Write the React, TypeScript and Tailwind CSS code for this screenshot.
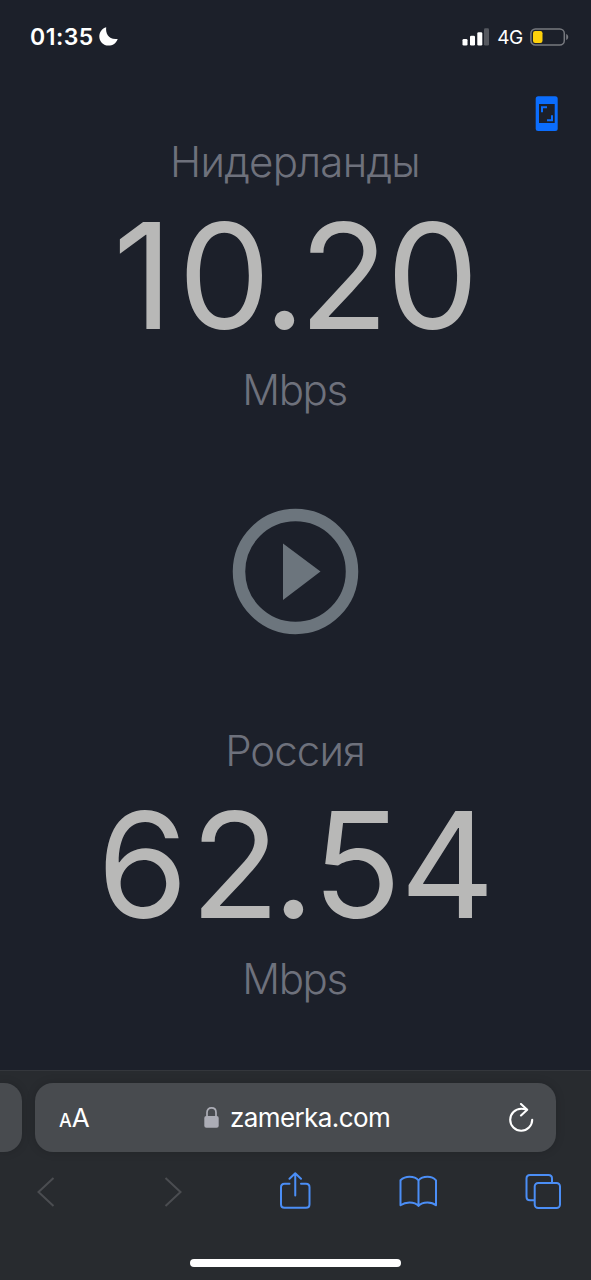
import React from 'react';

interface SpeedResultProps {
  country: string;
  labelClassName: string;
  children: React.ReactNode;
}

const SpeedResult: React.FC<SpeedResultProps> = ({ country, labelClassName, children }) => (
  <section className="flex flex-col items-center whitespace-nowrap text-[#6e717c]">
    <h2 className={`h-[50px] pr-px text-[42px] leading-[51px] font-light ${labelClassName}`}>{country}</h2>
    <p className="h-[180px] text-[147px] leading-[180px] text-[#b8b8b7]">{children}</p>
    <p className="h-12 pr-[2px] text-[42px] leading-[48px] font-light tracking-[-1.4px]">Mbps</p>
  </section>
);

const StatusBar = () => (
  <header className="flex h-[74px] items-center justify-between pl-[30px] pr-[22px] text-white">
    <div className="flex items-center gap-[5px]">
      <span className="text-[23px] leading-none font-semibold tracking-[0.5px]">01:35</span>
      <svg className="-mt-[2px]" width="19" height="19" viewBox="0 0 19 19" fill="currentColor">
        <path d="M7.2.3C6.4 6.700 9.600 13.100 18.700 11.900C17.200 16.100 13.700 18.600 9.500 18.600C4.300 18.600.3 14.600.3 9.500C.3 5.300 3.100 1.500 7.200.3Z" />
      </svg>
    </div>
    <div className="flex items-center">
      <svg width="27" height="18" viewBox="0 0 27 18" fill="currentColor">
        <rect x="0.500" y="11" width="5" height="6.500" rx="1.300" />
        <rect x="8" y="7.800" width="5" height="9.700" rx="1.300" />
        <rect x="15.300" y="4.300" width="5" height="13.200" rx="1.300" />
        <rect x="22" y="0.300" width="5" height="17.200" rx="1.300" opacity="0.250" />
      </svg>
      <span className="ml-[8px] text-[19px] leading-none tracking-[-0.3px]">4G</span>
      <svg className="ml-[7px]" width="39" height="18" viewBox="0 0 39 18">
        <rect x="0.900" y="0.900" width="33.400" height="16.200" rx="4.500" fill="none" stroke="#77797f" strokeWidth="1.500" />
        <rect x="3" y="3" width="9.500" height="12" rx="2.200" fill="#fdd10b" />
        <path d="M36.200 6v6c1.300-.5 2-1.700 2-3s-.7-2.500-2-3Z" fill="#77797f" />
      </svg>
    </div>
  </header>
);

const BottomBar = () => (
  <footer className="flex h-[210px] flex-col border-t border-[#34373c] bg-[#282b2f]">
    <div className="mt-3 flex h-[69px] gap-[13px] text-white">
      <div className="w-[22px] rounded-r-[18px] bg-[#484b4f] shadow-[0_0_10px_rgba(0,0,0,0.15)]" />
      <div className="flex w-[521px] items-center rounded-[18px] bg-[#484b4f] pl-6 pr-[22px] shadow-[0_0_10px_rgba(0,0,0,0.15)]">
        <div className="flex w-[145px] items-baseline leading-none">
          <span className="text-[18px] font-medium">A</span>
          <span className="text-[26px]">A</span>
        </div>
        <svg width="15" height="21" viewBox="0 0 15 21">
          <path d="M3 10V5.500C3 2.500 4.800.9 7.500.9S12 2.500 12 5.500V10" fill="none" stroke="#acadb6" strokeWidth="1.700" />
          <rect x="0.300" y="9" width="14.400" height="11.700" rx="2" fill="#acadb6" />
        </svg>
        <span className="ml-[11px] pt-px text-[26px] leading-none tracking-[-0.6px]">zamerka.com</span>
        <svg className="ml-auto" width="26" height="30" viewBox="0 0 26 30" fill="none" stroke="currentColor" strokeWidth="2.100" strokeLinecap="round" strokeLinejoin="round">
          <path d="M18.500 6.500C16.500 5.900 15 5.700 13.200 5.700A11 11 0 1 0 24.200 16.700" />
          <path d="M13 1L19.200 6.700L13 12.500" />
        </svg>
      </div>
    </div>
    <nav className="mt-[18px] flex h-11 items-center justify-between pl-[37px] pr-[30px] text-[#4b8ef6]">
      <svg width="18" height="30" viewBox="0 0 18 30" fill="none" stroke="#4b4d51" strokeWidth="2">
        <path d="M16.500 1L1.500 15L16.500 29" />
      </svg>
      <svg className="ml-[21px]" width="18" height="30" viewBox="0 0 18 30" fill="none" stroke="#4b4d51" strokeWidth="2">
        <path d="M1.500 1L16.500 15L1.500 29" />
      </svg>
      <svg className="ml-[9px]" width="32" height="40" viewBox="0 0 32 40" fill="none" stroke="currentColor" strokeWidth="2" strokeLinecap="round" strokeLinejoin="round">
        <path d="M10.500 11.700H5.500Q2 11.700 2 15.200V32.200Q2 35.700 5.500 35.700H27Q30.500 35.700 30.500 32.200V15.200Q30.500 11.700 27 11.700H22" />
        <path d="M16.250 23.500V1.200M10.500 6.700L16.250 1.200L22 6.700" />
      </svg>
      <svg className="-mt-[2px] ml-px" width="38" height="33" viewBox="0 0 38 33" fill="none" stroke="currentColor" strokeWidth="2" strokeLinejoin="round">
        <path d="M19.500 5.500C17.500 3 14 1.800 10.500 1.800S4 3 1.500 5.300V30.300C4 28.500 7 27.500 10.500 27.500S17.500 28.500 19.500 31C21.500 28.500 25 27.500 28.500 27.500S35 28.500 37 30.300V5.300C35 3 32 1.800 28.500 1.800S21.500 3 19.500 5.500ZM19.500 5.500V31" />
      </svg>
      <svg width="36" height="36" viewBox="0 0 36 36" fill="none" stroke="currentColor" strokeWidth="2">
        <path d="M9.500 26.200H5Q1.500 26.200 1.500 22.700V4.500Q1.500 1 5 1H23.500Q27 1 27 4.500V9" />
        <rect x="9.700" y="9" width="25.300" height="25" rx="3.500" />
      </svg>
    </nav>
    <div className="mx-auto mt-auto mb-[13px] h-2 w-[211px] rounded-full bg-white" />
  </footer>
);

const App = () => {
  return (
    <div className="flex h-[1280px] w-[591px] flex-col overflow-hidden bg-[#1c202a] font-[Inter,sans-serif]">
      <StatusBar />
      <main className="flex flex-1 flex-col">
        <div className="flex h-[62px] justify-end pt-[22px] pr-[33px]">
          <svg width="23" height="35" viewBox="0 0 23 35">
            <rect x="0.700" y="0.300" width="22" height="34.700" rx="2.500" fill="#0b6dfd" />
            <rect x="4" y="8" width="15.700" height="19" fill="#1c202a" />
            <path d="M7 16.300V11.300H12M12 24.300H17V19.300" fill="none" stroke="#0b6dfd" strokeWidth="2" />
          </svg>
        </div>
        <SpeedResult country="Нидерланды" labelClassName="tracking-[-0.75px]">
          <span className="tracking-[5px]">1</span>
          <span className="tracking-[-7.5px]">0</span>
          <span className="tracking-[-6.5px]">.</span>
          <span className="tracking-[-2.5px]">2</span>
          <span className="tracking-[-1px]">0</span>
        </SpeedResult>
        <button className="mx-auto mt-[94px]" aria-label="Play">
          <svg className="block" width="127" height="127" viewBox="0 0 127 127">
            <circle cx="63.500" cy="63.500" r="56.500" fill="none" stroke="#6c757d" strokeWidth="12.500" />
            <path d="M51 35.500V92L88.500 63.500Z" fill="#6c757d" />
          </svg>
        </button>
        <div className="mt-[90px]">
          <SpeedResult country="Россия" labelClassName="tracking-[-0.95px]">
            <span className="tracking-[2px]">6</span>
            <span className="tracking-[-7.5px]">2</span>
            <span className="tracking-[-2.5px]">.</span>
            <span className="tracking-[-1.5px]">5</span>
            <span className="tracking-[-1px]">4</span>
          </SpeedResult>
        </div>
      </main>
      <BottomBar />
    </div>
  );
};

export default App;
